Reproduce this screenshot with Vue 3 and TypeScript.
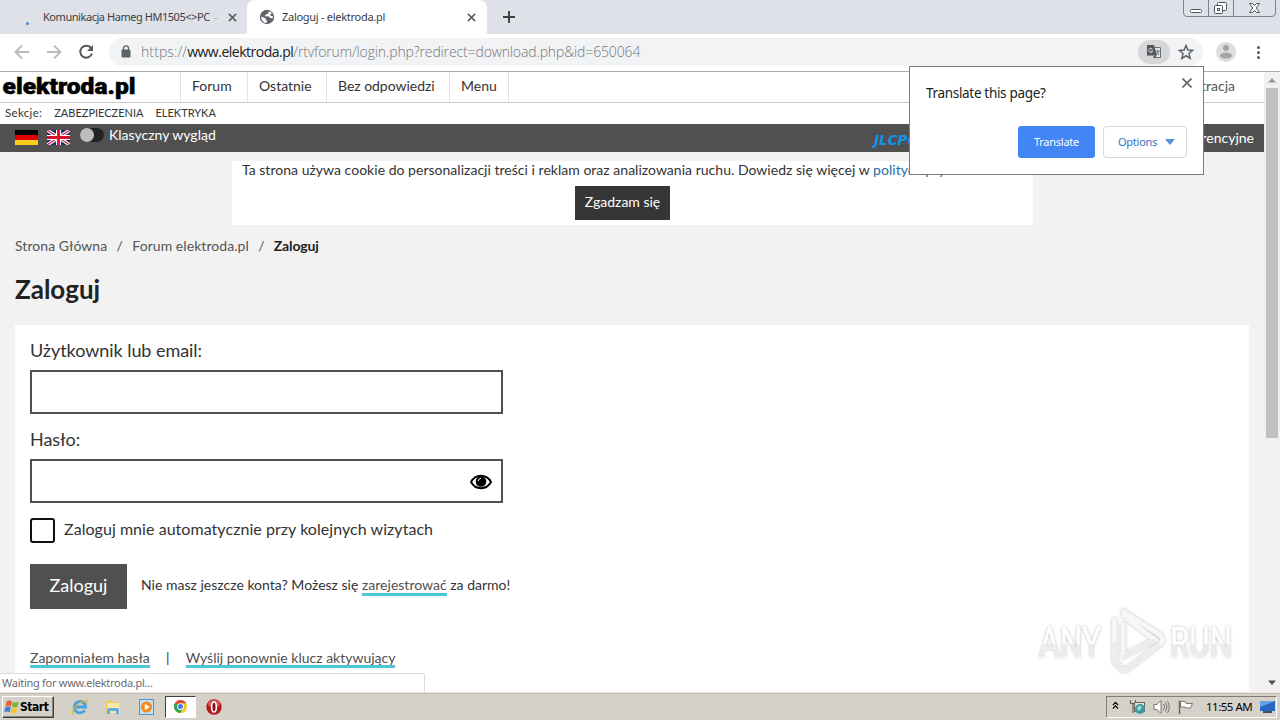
<script setup lang="ts">
interface Crumb {
  label: string
  current?: boolean
}

const navItems: string[] = ['Forum', 'Ostatnie', 'Bez odpowiedzi', 'Menu']
const sections: string[] = ['ZABEZPIECZENIA', 'ELEKTRYKA']
const crumbs: Crumb[] = [
  { label: 'Strona Główna' },
  { label: 'Forum elektroda.pl' },
  { label: 'Zaloguj', current: true },
]
</script>

<template>
  <div class="screen">
    <header class="tabs">
      <div class="tab inactive">
        <span class="spinner"></span>
        <span class="tab-title first">Komunikacja Hameg HM1505&lt;&gt;PC <i>-</i></span>
        <svg class="cross" viewBox="0 0 10 10"><path d="M1 1l8 8M9 1l-8 8" /></svg>
      </div>
      <div class="tab active">
        <svg class="globe" viewBox="0 0 16 16">
          <circle cx="8" cy="8" r="7.2" fill="#5f6368" />
          <path d="M2.3 7.5l4.2 1.8.3 1.6 1.3.6-.5 2.6A6 6 0 0 1 2.3 7.5zM7 2.3l2.9-.1-.2 1.6-1.7 1.4-1.8.5.1 1.8 3.4-.2 1.5 1.8 2.4.4.4-2.2-2-.4-.7-1.5 1.6-1.3a6 6 0 0 0-5.9-1.8z" fill="#fff" />
        </svg>
        <span class="tab-title second">Zaloguj - elektroda.pl</span>
        <svg class="cross" viewBox="0 0 10 10"><path d="M1 1l8 8M9 1l-8 8" /></svg>
      </div>
      <svg class="plus" viewBox="0 0 12 12"><path d="M6 0v12M0 6h12" /></svg>
      <svg class="win-controls" viewBox="0 0 94 18">
        <path d="M.5 0v13a3.500 3.500 0 0 0 3.500 3.500h85a3.500 3.500 0 0 0 3.500-3.500V0M25.500 0v16.500M50.500 0v16.500" fill="none" stroke="#7d818a" />
        <g fill="#fff" stroke="#50545c">
          <rect x="7.500" y="9.500" width="11" height="3" rx="1" />
          <rect x="34.500" y="2.500" width="9" height="8" rx="1" />
          <rect x="31.500" y="5.500" width="8" height="8" rx="1" />
          <rect x="34.500" y="8.500" width="2" height="2" />
          <path d="M66.500 3.500h3l2 2 2-2h3l-3.200 4.500 3.200 4.500h-3l-2-2-2 2h-3l3.200-4.500z" />
        </g>
      </svg>
    </header>

    <div class="toolbar">
      <svg class="nav-icons" viewBox="0 0 109 37">
        <g fill="none" stroke-width="1.800">
          <path d="M29 18H16M22 11.500L15.500 18l6.500 6.500M47 18h13M54 11.500l6.500 6.500-6.500 6.500" stroke="#b9bbbd" />
          <path d="M91.200 14.200A6 6 0 1 0 92 19.500" stroke="#54575b" stroke-width="2" />
          <path d="M93 11v6h-6z" fill="#54575b" />
        </g>
      </svg>
      <div class="omnibox">
        <svg class="lock" viewBox="0 0 10 13">
          <rect x=".5" y="4.500" width="9" height="8" rx="1" fill="#5f6368" />
          <path d="M2.500 5V3.300a2.500 2.500 0 0 1 5 0V5" fill="none" stroke="#5f6368" stroke-width="1.300" />
        </svg>
        <span class="url"><span class="scheme">https://</span><b>www.elektroda.pl</b><span class="path">/rtvforum/login.php?redirect=download.php&amp;id=650064</span></span>
        <span class="translate-chip">
          <svg viewBox="0 0 16 16">
            <path d="M7.500 3.500h7v10h-7" fill="#e4e5e6" stroke="#6b6e72" />
            <path d="M1 1h7l3 10.500H1z" fill="#55585c" />
            <path d="M6.500 5.300A2 2 0 1 0 6.700 7H5" fill="none" stroke="#ddd" />
            <path d="M9.500 7h4M11.500 5.800V7M13 7c-.5 2-1.700 3-2.700 3.500M10.500 8l2.500 3" fill="none" stroke="#6b6e72" />
            <path d="M8 14.500l3-3H7.500z" fill="#55585c" />
          </svg>
        </span>
        <svg class="star" viewBox="0 0 16 16"><path d="M8 1.500l1.850 4.500 4.850.4-3.700 3.150 1.150 4.750L8 11.750 3.850 14.300 5 9.550 1.300 6.400 6.150 6z" /></svg>
      </div>
      <svg class="avatar" viewBox="0 0 20 20">
        <circle cx="10" cy="10" r="10" fill="#dededf" />
        <circle cx="10" cy="6" r="3" fill="#a5a5a6" />
        <ellipse cx="10" cy="13.600" rx="6" ry="3" fill="#a5a5a6" />
      </svg>
      <span class="dots"><i></i><i></i><i></i></span>
    </div>

    <div class="viewport">
      <main class="page">
        <nav class="nav">
          <svg class="logo" viewBox="0 0 140 30"><text x="2.500" y="21.500" textLength="133" lengthAdjust="spacingAndGlyphs">elektroda.pl</text></svg>
          <div class="nav-list">
            <a v-for="(item, i) in navItems" :key="item" :class="['nav-item', 'n' + i]">{{ item }}</a>
          </div>
          <span class="register">Rejestracja</span>
        </nav>
        <div class="sections">
          <span class="sec-label">Sekcje:</span>
          <span v-for="s in sections" :key="s" class="section">{{ s }}</span>
        </div>
        <div class="darkbar">
          <svg class="flag" viewBox="0 0 23 15"><path fill="#000" d="M0 0h23v5H0z" /><path fill="#e00000" d="M0 5h23v5H0z" /><path fill="#ffce1c" d="M0 10h23v5H0z" /></svg>
          <svg class="flag uk" viewBox="0 0 23 15">
            <path fill="#19307c" d="M0 0h23v15H0z" />
            <path d="M0 0l23 15M23 0L0 15" stroke="#fff" stroke-width="3.400" />
            <path d="M0 0l23 15M23 0L0 15" stroke="#d6203c" stroke-width="1.200" />
            <path d="M11.500 0v15M0 7.500h23" stroke="#fff" stroke-width="5" />
            <path d="M11.500 0v15M0 7.500h23" stroke="#d6102c" stroke-width="2.800" />
          </svg>
          <span class="toggle"><i></i></span>
          <span class="classic">Klasyczny wygląd</span>
          <span class="jlc">JLCPCB</span>
          <span class="conf">Wątki konferencyjne</span>
        </div>
        <section class="cookie">
          <p>Ta strona używa cookie do personalizacji treści i reklam oraz analizowania ruchu. Dowiedz się więcej w <a>polityce prywatności</a></p>
          <button>Zgadzam się</button>
        </section>
        <div class="crumbs">
          <template v-for="(c, i) in crumbs" :key="c.label">
            <span v-if="i > 0" class="slash">/</span>
            <span :class="['crumb', { current: c.current }]">{{ c.label }}</span>
          </template>
        </div>
        <h1>Zaloguj</h1>
        <form class="panel">
          <label class="field-label">Użytkownik lub email:</label>
          <div class="field"></div>
          <label class="field-label">Hasło:</label>
          <div class="field">
            <svg class="eye" viewBox="0 0 22 16">
              <path d="M1 8c4.500-8.300 15.500-8.300 20 0-4.500 8.300-15.500 8.300-20 0z" fill="#fff" stroke="#000" stroke-width="1.900" />
              <circle cx="11" cy="7.500" r="5.300" />
              <path d="M8.300 7a3 3 0 0 1 2.700-2.700" fill="none" stroke="#fff" stroke-width="1" />
            </svg>
          </div>
          <div class="remember"><span class="box"></span><span>Zaloguj mnie automatycznie przy kolejnych wizytach</span></div>
          <div class="submit">
            <span class="login-btn">Zaloguj</span>
            <span class="hint">Nie masz jeszcze konta? Możesz się <a>zarejestrować</a> za darmo!</span>
          </div>
          <div class="links"><a>Zapomniałem hasła</a><span class="bar">|</span><a>Wyślij ponownie klucz aktywujący</a></div>
        </form>
      </main>
      <div class="scrollbar">
        <svg viewBox="0 0 16 16"><path d="M4 10.500h8l-4-4.500z" fill="#999" /></svg>
        <div class="thumb"></div>
        <svg viewBox="0 0 16 16"><path d="M4 5.500h8l-4 4.500z" fill="#4c4c4c" /></svg>
      </div>

      <div class="status">Waiting for www.elektroda.pl...</div>
      <svg class="watermark" viewBox="0 0 210 76">
        <defs>
          <linearGradient id="wm" x1="0" y1="0" x2="0" y2="1">
            <stop offset=".55" stop-color="#fff" />
            <stop offset=".55" stop-color="#ebebeb" />
          </linearGradient>
        </defs>
        <g class="wm-ink">
          <text x="9" y="51" textLength="62" lengthAdjust="spacingAndGlyphs">ANY</text>
          <text x="140" y="51" textLength="62" lengthAdjust="spacingAndGlyphs">RUN</text>
          <path d="M84.500 12v42q0 3 3 5l4 2M93 17v33l32-16-31-24v-4l36 23q5 5 0 9L96 64q-4 1-5-3" fill="none" stroke="#f7f7f7" stroke-width="5" />
          <path d="M84.500 36v18q0 3 3 5l4 2M93 50l32-16M130 38L96 64q-4 1-5-3" fill="none" stroke="#ececec" stroke-width="4" />
        </g>
      </svg>
    </div>

    <footer class="taskbar">
      <div class="start">
        <svg viewBox="0 0 16 16">
          <path d="M2.500 2.500q3-1.800 5.500 0L7 7.500q-3-1.500-5.500 0z" fill="#e8622b" />
          <path d="M8.800 3q3 1.300 6-.3l-1.200 5q-3 1.500-5.800.1z" fill="#7cb53c" />
          <path d="M1.300 8.300q3-1.500 5.500 0l-1 5q-3-1.800-5.500 0z" fill="#3f83d0" />
          <path d="M7.600 8.800q3 1.500 5.800 0l-1.200 5q-3 1.500-5.600 0z" fill="#f6c52c" />
        </svg>
        <b>Start</b>
      </div>
      <svg class="app ie" viewBox="0 0 18 18">
        <path d="M13.800 12.300A5.700 5.700 0 1 1 14.700 9H5" fill="none" stroke="#3fa4dd" stroke-width="2.800" />
        <path d="M3 15.800C-1 17 2 9.500 8 5.500s10-4.500 7.500.5" fill="none" stroke="#e2b33e" stroke-width="1.300" />
      </svg>
      <svg class="app folder" viewBox="0 0 18 18">
        <path d="M2 2h6l1 2h6v10H2z" fill="#edce6c" /><path d="M4 5h11l1 10H3z" fill="#f9e9a6" />
        <path d="M3 16v-4q0-2 2-2h8q2 0 2 2v4h-3v-3H6v3z" fill="#65aedc" />
      </svg>
      <svg class="app media" viewBox="0 0 18 18">
        <rect x="1.500" y="1.500" width="14" height="15" fill="#c5e0f6" stroke="#5593c9" />
        <circle cx="8.500" cy="9" r="5.500" fill="#f28a18" /><path d="M6.800 5.800l5 3.200-5 3.200z" fill="#fff" />
      </svg>
      <div class="running">
        <svg viewBox="0 0 16 16">
          <circle cx="8" cy="8" r="7" fill="#f5c62c" />
          <path d="M8 8L1.900 4.500A7 7 0 0 1 14.100 4.500H8z" fill="#de4a3b" />
          <path d="M1.900 4.500A7 7 0 0 0 7.500 15l3-5.500L8 8z" fill="#32a055" />
          <circle cx="8" cy="8" r="3.600" fill="#fff" /><circle cx="8" cy="8" r="2.700" fill="#3f7de0" />
        </svg>
      </div>
      <svg class="app opera" viewBox="0 0 18 18">
        <circle cx="9" cy="9" r="7.700" fill="#b4151b" /><ellipse cx="9" cy="6" rx="6" ry="4" fill="#d9565a" />
        <ellipse cx="9" cy="9" rx="2.300" ry="5" fill="#8b0c10" stroke="#fff" stroke-width="1.600" />
      </svg>
      <div class="tray">
        <svg class="chev" viewBox="0 0 8 10"><path d="M1 4.500L4 1.500l3 3M1 8.500l3-3 3 3" fill="none" stroke="#000" stroke-width="1.400" /></svg>
        <svg class="net" viewBox="0 0 17 16">
          <path d="M1.500 1v3.500h5V1M4 4.500V14" fill="none" stroke="#666" stroke-width="1.200" />
          <rect x="5.500" y="3.500" width="10" height="9" fill="#d9e4e2" stroke="#666" />
          <circle cx="11" cy="10" r="5" fill="#3c9ba0" /><path d="M8 9q2-4 5-1l-2 3q-2 2-3-2z" fill="#a5dcc5" />
        </svg>
        <svg class="sound" viewBox="0 0 17 16">
          <path d="M1 5.500h3l4-4v13l-4-4H1z" fill="#fff" stroke="#777" />
          <path d="M10.500 5q2 3 0 6M12.500 3.500q3 4.500 0 9M14.500 2q3.500 6 0 12" fill="none" stroke="#777" />
        </svg>
        <svg class="flagicon" viewBox="0 0 17 16"><path d="M2.500 15V1.500" stroke="#666" stroke-width="1.500" /><path d="M3.500 2.500q2.500-1 5 .5 0 1.500 1 1.500h6l-2 4.500h-5L8 8H3.500z" fill="#fff" stroke="#777" /></svg>
        <span class="clock">11:55 AM</span>
        <svg class="desk" viewBox="0 0 15 14"><path d="M0 1h15v10H0z" fill="#2968c0" /><path d="M0 1h15L0 7z" fill="#67a3e4" /><path d="M3 11h9v2H3z" fill="#3b4e68" /></svg>
      </div>
    </footer>

    <aside class="bubble">
      <div class="bubble-head">
        <span>Translate this page?</span>
        <svg class="cross" viewBox="0 0 10 10"><path d="M.5.5l9 9M9.500.5l-9 9" /></svg>
      </div>
      <div class="bubble-actions">
        <span class="primary">Translate</span>
        <span class="options">Options<i></i></span>
      </div>
    </aside>
  </div>
</template>

<style>
html,
body {
  margin: 0;
  overflow: hidden;
}
</style>

<style scoped>
.screen {
  position: relative;
  display: flex;
  flex-direction: column;
  width: 1280px;
  height: 720px;
  overflow: hidden;
  background: #fff;
  font-family: Lato, "Noto Sans", sans-serif;
  white-space: nowrap;
}
.screen * { box-sizing: border-box; }
svg { display: block; flex: none; }

.tabs {
  display: flex;
  height: 34px;
  flex: none;
  background: #dee1e8;
  font: 11px/34px "Noto Sans", sans-serif;
  color: #3c4043;
}
.tab { display: flex; align-items: center; height: 34px; }
.tab.inactive { width: 247px; padding-left: 26px; border-bottom-right-radius: 8px; }
.spinner { width: 3px; height: 3px; margin: 12px 14px 0 0; border-radius: 50%; background: #4285d8; }
.tab-title { flex: none; }
.tab-title i { margin-left: 2px; font-style: normal; color: #a9acb2; }
.first { width: 185px; letter-spacing: -0.450px; }
.tab.active { position: relative; width: 240px; padding-left: 12px; border-radius: 8px 8px 0 0; background: #fff; }
.second { width: 185px; margin-left: 7px; letter-spacing: -0.280px; }
.globe { width: 16px; height: 16px; }
.cross { width: 9px; height: 9px; }
.cross path { stroke: #5f6368; stroke-width: 1.900; fill: none; }
.plus { width: 12px; height: 12px; margin: 11px 0 0 16px; }
.plus path { stroke: #3c4043; stroke-width: 1.900; }
.win-controls { width: 94px; height: 18px; margin-left: auto; margin-right: 3px; }

.toolbar { display: flex; height: 38px; flex: none; border-bottom: 1px solid #adadad; background: #fff; }
.nav-icons { width: 109px; height: 37px; }
.omnibox { display: flex; align-items: center; width: 1094px; height: 28px; margin-top: 4px; padding-left: 12px; border-radius: 14px; background: #f1f3f4; }
.lock { width: 10px; height: 13px; margin-bottom: 1px; }
.url { margin-left: 10px; font: 300 14px/28px "Open Sans", "Noto Sans", sans-serif; color: #73777b; }
.scheme { letter-spacing: 0.100px; }
.url b { font-weight: 400; color: #202124; letter-spacing: -0.500px; }
.url .path { letter-spacing: -0.130px; }
.translate-chip { display: grid; place-items: center; width: 32px; height: 24px; margin-left: auto; border-radius: 12px; background: #d5d7d9; }
.translate-chip svg { width: 16px; height: 16px; }
.star { width: 16px; height: 16px; margin: 0 9px 0 8px; }
.star path { fill: none; stroke: #5f6368; stroke-width: 1.500; }
.avatar { width: 20px; height: 20px; margin: 8px 0 0 13px; }
.dots { display: flex; flex-direction: column; gap: 2px; margin: 12px 0 0 21px; }
.dots i { width: 3px; height: 3px; border-radius: 50%; background: #55585c; }

.viewport { position: relative; display: flex; height: 620px; flex: none; }
.page { width: 1264px; height: 620px; overflow: hidden; background: #f2f2f2; color: #333; }
.nav { display: flex; height: 31px; border-bottom: 1px solid #c9c9c9; background: #fff; }
.logo { width: 140px; height: 30px; }
.logo text { font: 900 22px Roboto, sans-serif; fill: #000; stroke: #000; stroke-width: 0.500px; }
.nav-list { display: flex; margin-left: 40px; border-left: 1px solid #e2e2e2; font-size: 14px; line-height: 28px; }
.nav-item { border-right: 1px solid #e2e2e2; padding-left: 11px; }
.n0 { width: 67px; }
.n1 { width: 79px; }
.n2 { width: 123px; letter-spacing: -0.030px; }
.n3 { width: 59px; }
.register { margin: 0 29px 0 auto; font-size: 14px; line-height: 28px; color: #555; }
.sections { display: flex; height: 21px; padding-left: 5px; gap: 12px; background: #fff; font-size: 11.500px; line-height: 20px; }
.sec-label { letter-spacing: 0.320px; }
.section { font-size: 11px; }
.darkbar { display: flex; height: 28px; padding: 0 10px 0 15px; background: #505050; color: #fff; }
.flag { width: 23px; height: 15px; margin-top: 6px; }
.uk { margin-left: 9px; }
.toggle { width: 24px; height: 14px; margin: 4px 0 0 10px; border-radius: 7px; background: #242424; }
.toggle i { display: block; width: 14px; height: 14px; border-radius: 50%; background: #bdbdbd; }
.classic { margin-left: 5px; font-size: 14px; line-height: 22px; }
.jlc { width: 109px; margin-left: auto; font: italic 700 13.500px/32px "DejaVu Sans", sans-serif; color: #1593e8; }
.conf { width: 271px; text-align: right; font-size: 14px; line-height: 28px; }
.cookie { width: 801px; height: 64px; margin: 9px 0 0 232px; background: #fff; text-align: center; }
.cookie p { margin: 0; padding-left: 10px; height: 25px; line-height: 18px; text-align: left; font-size: 14px; letter-spacing: 0.025px; }
.cookie a { color: #296ca3; }
.cookie button { display: block; width: 95px; height: 34px; margin-left: 343px; padding: 0 0 2px; border: 0; background: #363636; color: #fff; font: 14px/32px Lato, sans-serif; }
.crumbs { display: flex; height: 20px; margin-top: 11px; padding-left: 15px; font-size: 14px; line-height: 20px; color: #555; }
.crumb { letter-spacing: 0.060px; }
.slash { width: 25px; text-align: center; }
.crumb.current { font-weight: 700; color: #222; letter-spacing: -0.150px; }
h1 { height: 40px; margin: 13px 0 0 15px; font: 700 26px/40px Lato, sans-serif; color: #222; }
.panel { width: 1234px; height: 400px; margin: 16px 0 0 15px; padding-left: 15px; background: #fff; }
.field-label { display: block; height: 45px; font-size: 18px; line-height: 51px; letter-spacing: -0.050px; }
.field { display: flex; align-items: center; justify-content: flex-end; width: 473px; height: 44px; padding-right: 9px; border: 2px solid #505050; }
.eye { width: 22px; height: 16px; margin-top: 1px; }
.remember { display: flex; height: 25px; margin-top: 15px; font-size: 16px; line-height: 21px; letter-spacing: 0.050px; }
.box { width: 25px; height: 25px; margin-right: 9px; border: 2px solid #111; border-radius: 3px; }
.submit { display: flex; align-items: center; height: 45px; margin-top: 21px; }
.login-btn { width: 97px; height: 45px; background: #505050; color: #fff; font-size: 18px; line-height: 42px; text-align: center; }
.hint { margin: -3px 0 0 14px; font-size: 14px; letter-spacing: 0.010px; }
.hint a,
.links a { display: inline-block; height: 20px; line-height: 20px; border-bottom: 3px solid #4dc5d6; color: #505050; }
.hint a { height: 21px; }
.links { display: flex; height: 20px; margin-top: 39px; font-size: 14px; line-height: 20px; }
.links .bar { width: 36px; text-align: center; }
.scrollbar { display: flex; flex-direction: column; width: 16px; background: #f1f1f1; }
.scrollbar svg { width: 16px; height: 16px; }
.thumb { width: 12px; height: 350px; margin: 0 0 auto 2px; background: #c1c1c1; }
.scrollbar svg:last-child { margin-bottom: 1px; }

.status { position: absolute; left: 0; bottom: 0; width: 425px; height: 19px; padding-left: 2px; border: 1px solid #dcdcdc; border-left: 0; border-bottom: 0; border-top-right-radius: 3px; background: #fff; font: 11px/17px "Noto Sans", sans-serif; letter-spacing: -0.270px; color: #6c6c6c; }
.watermark { position: absolute; left: 1030px; top: 534px; width: 210px; height: 76px; }
.wm-ink { filter: drop-shadow(0 0 1.500px #bbb); }
.wm-ink text { font: 400 43px "Liberation Sans Narrow", Roboto, sans-serif; fill: url(#wm); stroke: #fff; stroke-width: 0.300px; }

.taskbar { display: flex; align-items: center; height: 28px; flex: none; padding-left: 2px; border-top: 1px solid #e9e6e0; box-shadow: inset 0 1px #c4c0b8; background: #d5d0c8; font-family: "DejaVu Sans Condensed", "DejaVu Sans", sans-serif; }
.start { display: flex; align-items: center; width: 52px; height: 22px; margin-top: 1px; padding-left: 1px; border: 1px solid; border-color: #fff #404040 #404040 #fff; box-shadow: inset -1px -1px #868279; font-size: 12px; }
.start svg { width: 16px; height: 16px; }
.start b { letter-spacing: -0.450px; color: #000; }
.app { width: 18px; height: 18px; }
.ie { margin-left: 17px; }
.folder { margin-left: 15px; }
.media { margin-left: 16px; }
.running { display: grid; place-items: center; width: 31px; height: 22px; margin-left: 9px; background: #fff; border: 1px solid; border-color: #404040 #fff #fff #404040; }
.running svg { width: 15px; height: 15px; }
.opera { margin-left: 9px; }
.tray { display: flex; align-items: center; width: 171px; height: 22px; margin-left: auto; margin-right: 3px; padding-left: 5px; border: 1px solid; border-color: #817d76 #fff #fff #817d76; }
.chev { width: 7px; height: 9px; margin-bottom: 2px; }
.net, .sound, .flagicon { width: 17px; height: 16px; }
.net { margin-left: 10px; }
.sound { margin-left: 7px; }
.flagicon { margin-left: 7px; }
.clock { width: 54px; margin-left: 12px; font-family: "Noto Sans", sans-serif; font-size: 11.500px; letter-spacing: -0.500px; color: #000; }
.desk { width: 15px; height: 14px; }

.bubble { position: absolute; left: 909px; top: 66px; width: 295px; height: 109px; padding: 0 16px; border: 1px solid #7b7b7b; background: #fff; font-family: "Noto Sans", sans-serif; }
.bubble-head { display: flex; justify-content: space-between; height: 59px; font-size: 13.500px; line-height: 52px; letter-spacing: -0.320px; color: #222; }
.bubble-head .cross { width: 10px; height: 10px; margin: 11px -5px 0 0; }
.bubble-head .cross path { stroke-width: 1.600; }
.bubble-actions { display: flex; justify-content: flex-end; gap: 8px; font-size: 11px; line-height: 31px; letter-spacing: -0.250px; }
.primary { width: 77px; height: 32px; border-radius: 3px; background: #4285f4; color: #fff; text-align: center; }
.options { display: flex; align-items: center; justify-content: space-between; width: 84px; height: 32px; padding: 0 11px 0 14px; border: 1px solid #d5d8dc; border-radius: 4px; color: #3572c8; line-height: 28px; }
.options i { border: 5px solid transparent; border-top: 6px solid #5a93da; border-bottom: 0; }
</style>
